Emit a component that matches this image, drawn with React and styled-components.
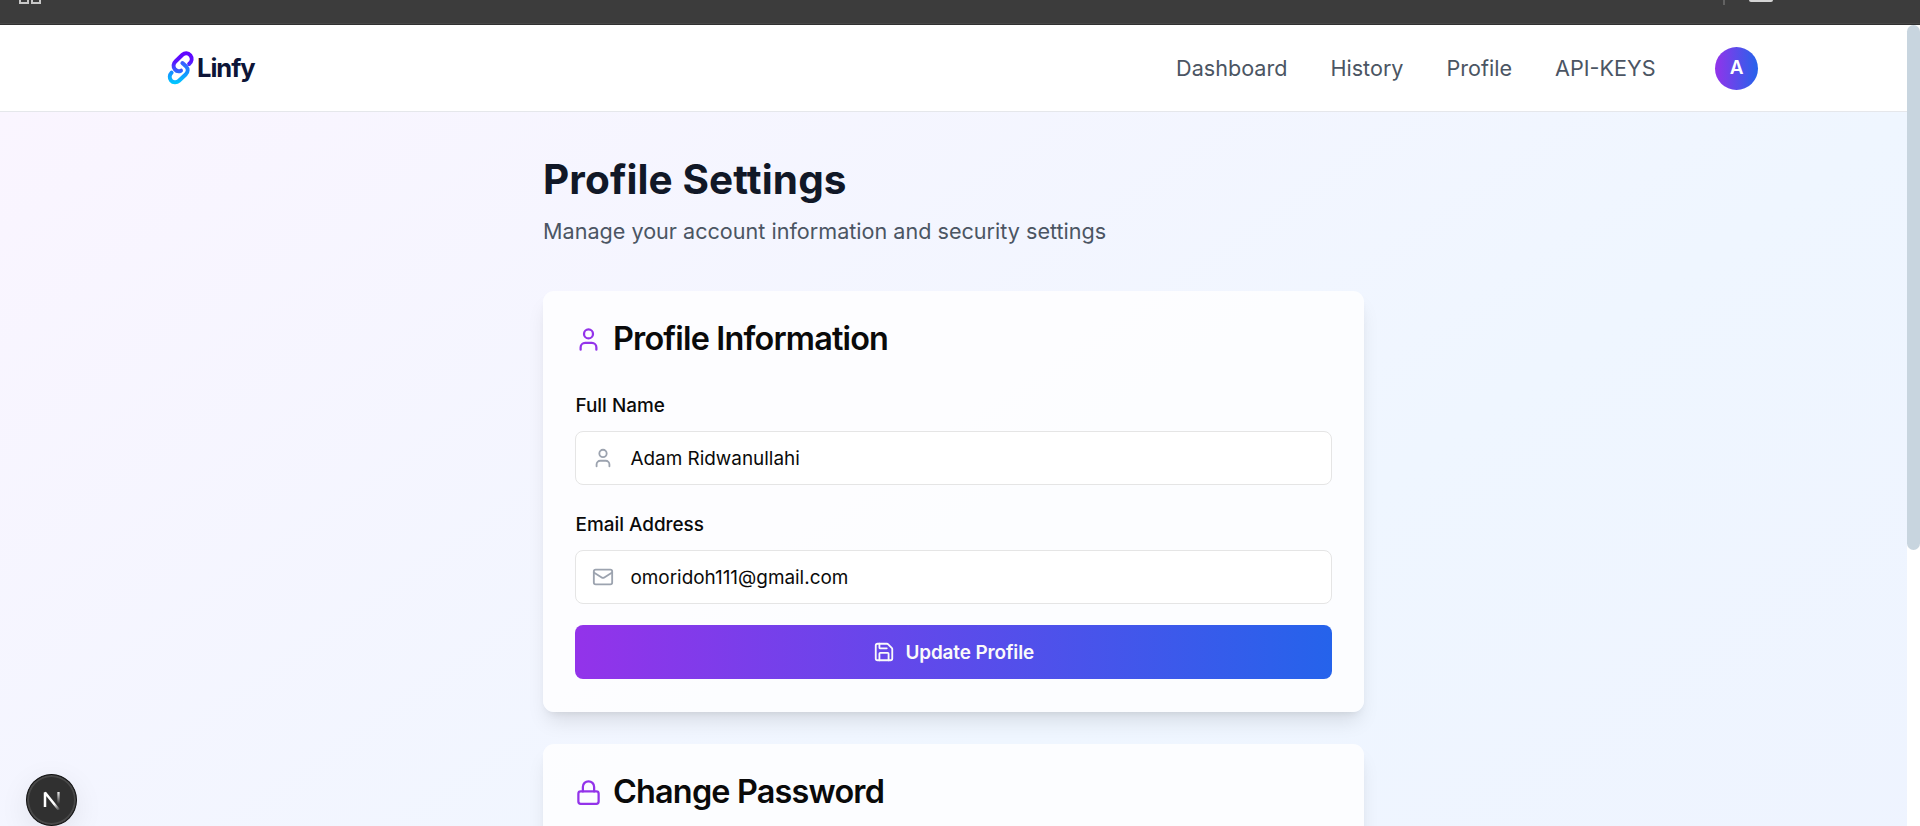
import React from "react";
import styled, { createGlobalStyle } from "styled-components";
import { User, Mail, Save, Lock } from "lucide-react";

const GlobalStyle = createGlobalStyle`
  *, *::before, *::after { box-sizing: border-box; }
  body { margin: 0; overflow: hidden; background: #fff; font-family: Inter, "Liberation Sans", sans-serif; }
  h1, h2, p { margin: 0; }
`;

const Screen = styled.div`
  display: flex;
  flex-direction: column;
  height: 100vh;
  overflow: hidden;
  position: relative;
`;

const BrowserBar = styled.div`
  flex: none;
  height: 25px;
  background: #3c3c3c;
  border-bottom: 1px solid #303030;
  box-shadow: inset 0 -1px 0 #464646;
  display: flex;
  align-items: flex-start;
  justify-content: space-between;
  padding: 0 147px 0 19px;
`;

const BarRight = styled.div`
  display: flex;
  gap: 24px;
`;

const Separator = styled.div`
  width: 2px;
  height: 5px;
  background: #626262;
`;

const TabStub = styled.div`
  width: 24px;
  height: 2px;
  border-radius: 0 0 2px 2px;
  background: #d4d4d4;
`;

const Viewport = styled.div`
  flex: 1;
  min-height: 0;
  display: flex;
`;

const Page = styled.div`
  flex: 1;
  display: flex;
  flex-direction: column;
  min-width: 0;
`;

const ScrollTrack = styled.div`
  flex: none;
  width: 13px;
  background: #fff;
`;

const ScrollThumb = styled.div`
  height: 525px;
  border-radius: 7px;
  background: #c8d5df;
`;

const Header = styled.header`
  flex: none;
  height: 87px;
  border-bottom: 1px solid #e5e7eb;
  background: #fff;
  display: flex;
  align-items: center;
  justify-content: space-between;
  padding: 0 149px 0 167px;
`;

const Brand = styled.div`
  display: flex;
  align-items: center;
  gap: 2px;
  padding-bottom: 1px;
  color: #0d1537;
  font: 700 25.5px/34px "Inter", sans-serif;
  letter-spacing: -1px;
`;

const Nav = styled.nav`
  display: flex;
  align-items: center;
  gap: 43px;
  font-size: 21.6px;
  line-height: 32px;
  color: #4b5563;
`;

const Avatar = styled.div`
  width: 43px;
  height: 43px;
  margin-left: 16.5px;
  border-radius: 50%;
  background: linear-gradient(90deg, #9333ea, #2563eb);
  color: #fff;
  font-size: 18.9px;
  font-weight: 600;
  display: flex;
  align-items: center;
  justify-content: center;
`;

const Main = styled.main`
  flex: none;
  height: 1330px;
  padding-top: 44px;
  background: linear-gradient(to bottom right, #faf5ff, #eff6ff 50%, #eef2ff);
  display: flex;
  flex-direction: column;
  align-items: center;
`;

const Column = styled.div`
  width: 821px;
  display: flex;
  flex-direction: column;
`;

const Title = styled.h1`
  font-size: 40.5px;
  line-height: 48px;
  font-weight: 700;
  letter-spacing: 0.1px;
  color: #111827;
`;

const Subtitle = styled.p`
  margin: 11px 0 44px;
  font-size: 21.6px;
  line-height: 32px;
  color: #4b5563;
`;

const Card = styled.section`
  height: 421px;
  margin-bottom: 32px;
  padding: 32px;
  border-radius: 11px;
  background: rgba(255, 255, 255, 0.8);
  box-shadow: 0 13px 20px -4px rgba(0, 0, 0, 0.1), 0 5px 8px -5px rgba(0, 0, 0, 0.1);
  display: flex;
  flex-direction: column;
`;

const CardTitle = styled.h2`
  display: flex;
  align-items: center;
  gap: 11px;
  height: 32px;
  margin-bottom: 41px;
  font-size: 32.4px;
  line-height: 32px;
  font-weight: 600;
  letter-spacing: -0.81px;
  color: #0a0a0a;
  svg { color: #9333ea; flex: none; }
`;

const Label = styled.label`
  padding-left: 0.5px;
  font-size: 18.9px;
  line-height: 20px;
  font-weight: 500;
  color: #0a0a0a;
`;

const Field = styled.div`
  flex: none;
  display: flex;
  align-items: center;
  gap: 16.5px;
  height: 54px;
  margin: ${(p) => p.$margin};
  padding: 0 16px;
  border: 1px solid #e5e5e5;
  border-radius: 8px;
  background: #fff;
  font-size: 18.9px;
  color: #0a0a0a;
  svg { color: #9ca3af; flex: none; }
`;

const SubmitButton = styled.button`
  flex: none;
  height: 54px;
  border: 0;
  border-radius: 8px;
  background: linear-gradient(90deg, #9333ea, #2563eb);
  color: #fafafa;
  font: 600 18.9px/27px Inter, sans-serif;
  letter-spacing: -0.1px;
  display: flex;
  align-items: center;
  justify-content: center;
  gap: 10.5px;
`;

const DevBadge = styled.div`
  position: absolute;
  left: 26px;
  top: 774px;
  width: 51px;
  height: 52px;
  border-radius: 50%;
  background: #303030;
  border: 1px solid #111;
  box-shadow: inset 0 0 0 2px #484848, 0 8px 30px rgba(0, 0, 0, 0.08);
  display: flex;
  align-items: center;
  justify-content: center;
`;

const GridIcon = () => (
  <svg width="24" height="5" viewBox="0 0 24 5" fill="none" stroke="#c8c8c8" strokeWidth="2">
    <path d="M1 -4V3H9V-4M13 -4V3H21V-4" />
  </svg>
);

const LinkLogo = () => (
  <svg width="28" height="36" viewBox="0 0 28 36" fill="none" strokeWidth="4" strokeLinecap="round">
    <defs>
      <linearGradient id="linkTop" x1="0" y1="2" x2="0" y2="23" gradientUnits="userSpaceOnUse">
        <stop offset="0" stopColor="#6200ff" />
        <stop offset="0.5" stopColor="#5a14ff" />
        <stop offset="1" stopColor="#2d6bff" />
      </linearGradient>
      <linearGradient id="linkBottom" x1="0" y1="13" x2="0" y2="34" gradientUnits="userSpaceOnUse">
        <stop offset="0" stopColor="#3a5cff" />
        <stop offset="0.45" stopColor="#168dff" />
        <stop offset="1" stopColor="#00c8ff" />
      </linearGradient>
    </defs>
    <g transform="translate(0.7 -0.6)">
      <path stroke="url(#linkBottom)" d="M3.9 23.3C1.7 25.6 1.5 28.8 3.3 31C5.3 33.4 9 33.5 11.3 31.3L18.2 24.8C20.5 22.5 20.4 19.2 18.5 17.1L14.7 13.6" />
      <path stroke="url(#linkTop)" d="M21.5 14.5C24.2 12.3 24.8 8.6 22.6 5.8C20.4 3.3 17 3.4 14.7 5.4L8 11.8C5.5 14.1 5.2 17.4 7.2 20C8.9 22 11.2 22.3 13.3 21.3" />
    </g>
  </svg>
);

const NextMark = () => (
  <svg width="18" height="20" viewBox="0 0 18 20" fill="none">
    <defs>
      <linearGradient id="diag" x1="9" y1="11" x2="17" y2="20" gradientUnits="userSpaceOnUse">
        <stop offset="0.3" stopColor="#fff" />
        <stop offset="1" stopColor="#fff" stopOpacity="0" />
      </linearGradient>
      <linearGradient id="stem" x1="0" y1="1" x2="0" y2="14" gradientUnits="userSpaceOnUse">
        <stop stopColor="#fff" />
        <stop offset="1" stopColor="#fff" stopOpacity="0" />
      </linearGradient>
    </defs>
    <path d="M2 17V2.5L16 20" stroke="url(#diag)" strokeWidth="2.5" strokeLinejoin="bevel" />
    <path d="M15.5 2V14" stroke="url(#stem)" strokeWidth="2.3" />
  </svg>
);

export default function App() {
  return (
    <Screen>
      <GlobalStyle />
      <BrowserBar>
        <GridIcon />
        <BarRight>
          <Separator />
          <TabStub />
        </BarRight>
      </BrowserBar>
      <Viewport>
        <Page>
          <Header>
            <Brand>
              <LinkLogo />
              Linfy
            </Brand>
            <Nav>
              <span>Dashboard</span>
              <span>History</span>
              <span>Profile</span>
              <span>API-KEYS</span>
              <Avatar>A</Avatar>
            </Nav>
          </Header>
          <Main>
            <Column>
              <Title>Profile Settings</Title>
              <Subtitle>Manage your account information and security settings</Subtitle>
              <Card>
                <CardTitle>
                  <User size={27} />
                  Profile Information
                </CardTitle>
                <Label>Full Name</Label>
                <Field $margin="15px 0 30px">
                  <User size={22} />
                  Adam Ridwanullahi
                </Field>
                <Label>Email Address</Label>
                <Field $margin="15px 0 21px">
                  <Mail size={22} />
                  omoridoh111@gmail.com
                </Field>
                <SubmitButton>
                  <Save size={22} />
                  Update Profile
                </SubmitButton>
              </Card>
              <Card>
                <CardTitle>
                  <Lock size={27} />
                  Change Password
                </CardTitle>
              </Card>
            </Column>
          </Main>
        </Page>
        <ScrollTrack>
          <ScrollThumb />
        </ScrollTrack>
      </Viewport>
      <DevBadge>
        <NextMark />
      </DevBadge>
    </Screen>
  );
}
